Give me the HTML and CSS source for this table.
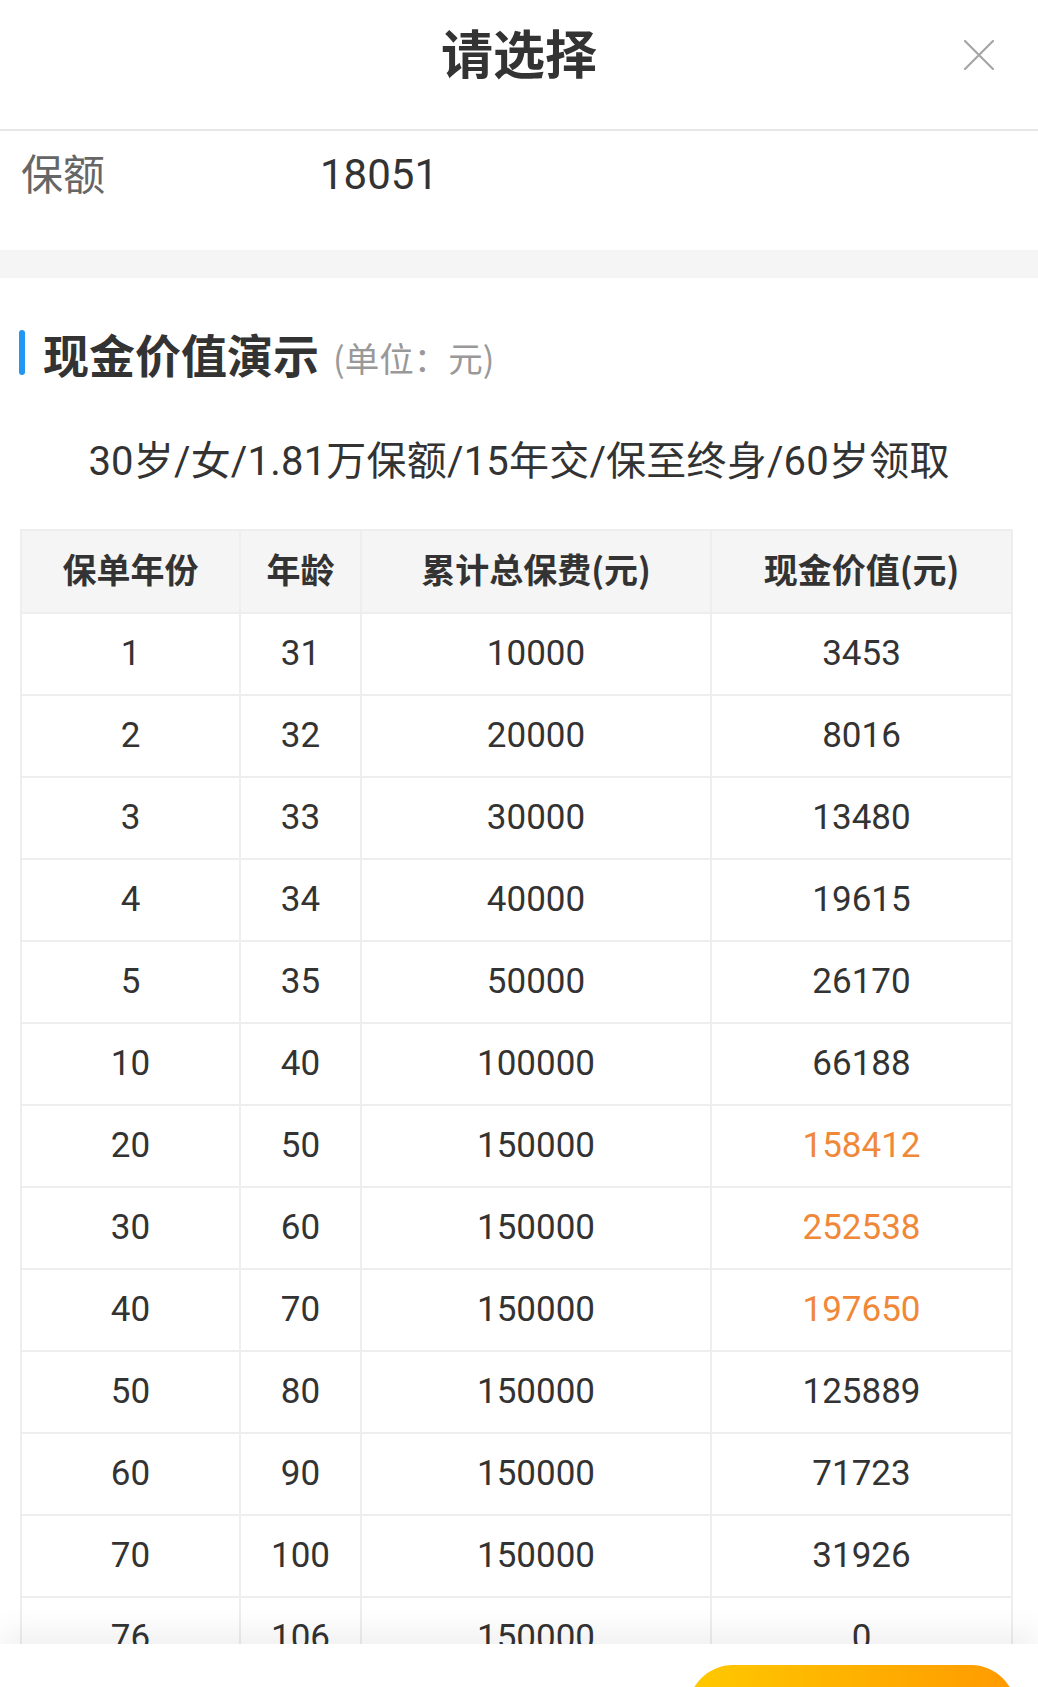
FILE: index.html
```html
<!DOCTYPE html>
<html lang="zh-CN">
<head>
<meta charset="utf-8">
<title>请选择</title>
<link rel="stylesheet" href="styles.css">
</head>
<body>
<div class="sheet">
  <header class="sheet-header">
    <span class="spacer"></span>
    <h1 class="sheet-title">请选择</h1>
    <button class="close-btn" aria-label="关闭">
      <svg viewBox="0 0 30 30" width="30" height="30"><path d="M1 1 L29 29 M29 1 L1 29" stroke="#a6a6a6" stroke-width="2.2" stroke-linecap="round" fill="none"/></svg>
    </button>
  </header>

  <div class="amount-row">
    <span class="amount-label">保额</span>
    <span class="amount-value">18051</span>
  </div>

  <div class="band"></div>

  <div class="section-head">
    <span class="section-bar"></span>
    <h2 class="section-title">现金价值演示</h2>
    <span class="section-unit">(单位：元)</span>
  </div>

  <p class="subtitle">30岁/女/1.81万保额/15年交/保至终身/60岁领取</p>

  <div class="table-wrap">
    <table class="cv-table">
      <colgroup>
        <col class="c1"><col class="c2"><col class="c3"><col class="c4">
      </colgroup>
      <thead>
        <tr><th>保单年份</th><th>年龄</th><th>累计总保费(元)</th><th>现金价值(元)</th></tr>
      </thead>
      <tbody>
        <tr><td>1</td><td>31</td><td>10000</td><td>3453</td></tr>
        <tr><td>2</td><td>32</td><td>20000</td><td>8016</td></tr>
        <tr><td>3</td><td>33</td><td>30000</td><td>13480</td></tr>
        <tr><td>4</td><td>34</td><td>40000</td><td>19615</td></tr>
        <tr><td>5</td><td>35</td><td>50000</td><td>26170</td></tr>
        <tr><td>10</td><td>40</td><td>100000</td><td>66188</td></tr>
        <tr><td>20</td><td>50</td><td>150000</td><td class="hl">158412</td></tr>
        <tr><td>30</td><td>60</td><td>150000</td><td class="hl">252538</td></tr>
        <tr><td>40</td><td>70</td><td>150000</td><td class="hl">197650</td></tr>
        <tr><td>50</td><td>80</td><td>150000</td><td>125889</td></tr>
        <tr><td>60</td><td>90</td><td>150000</td><td>71723</td></tr>
        <tr><td>70</td><td>100</td><td>150000</td><td>31926</td></tr>
        <tr><td>76</td><td>106</td><td>150000</td><td>0</td></tr>
      </tbody>
    </table>
  </div>

  <footer class="sheet-footer">
    <button class="confirm-btn">确定</button>
  </footer>
</div>
</body>
</html>
```

FILE: styles.css
```css
* { box-sizing: border-box; }

html, body {
  margin: 0;
  padding: 0;
  background: #ffffff;
}

body {
  font-family: "Roboto", "Noto Sans CJK SC", "Noto Sans", sans-serif;
  color: #333333;
}

.sheet {
  width: 1038px;
  height: 1687px;
  overflow: hidden;
  display: flex;
  flex-direction: column;
  background: #fff;
}

.sheet-header {
  flex: none;
  height: 131px;
  display: grid;
  grid-template-columns: 1fr auto 1fr;
  align-items: start;
  border-bottom: 2px solid #e6e6e6;
}

.sheet-title {
  margin: 22px 0 0;
  font-family: "Noto Sans CJK SC", sans-serif;
  font-size: 52px;
  line-height: 60px;
  font-weight: 700;
  color: #333;
}

.close-btn {
  justify-self: end;
  margin: 40px 44px 0 0;
  width: 30px;
  height: 30px;
  padding: 0;
  border: 0;
  background: none;
  display: flex;
}

.amount-row {
  flex: none;
  height: 119px;
  display: flex;
  align-items: flex-start;
  padding: 16px 0 0 21px;
}

.amount-label {
  width: 299px;
  font-family: "Noto Sans CJK SC", sans-serif;
  font-size: 42px;
  line-height: 50px;
  color: #666;
}

.amount-value {
  margin-top: 3px;
  font-size: 42px;
  line-height: 50px;
  color: #333;
}

.band {
  flex: none;
  height: 28px;
  background: #f5f5f5;
}

.section-head {
  flex: none;
  display: flex;
  align-items: center;
  margin: 52px 0 0 19px;
  height: 45px;
}

.section-bar {
  width: 6px;
  height: 45px;
  border-radius: 3px;
  background: #2196f3;
  margin-right: 18px;
}

.section-title {
  margin: 0;
  font-family: "Noto Sans CJK SC", sans-serif;
  font-size: 46px;
  line-height: 50px;
  font-weight: 700;
  color: #333;
}

.section-unit {
  margin: 8px 0 0 14px;
  font-family: "Noto Sans CJK SC", sans-serif;
  font-size: 34.5px;
  line-height: 40px;
  color: #999;
}

.subtitle {
  flex: none;
  margin: 62px 0 0;
  text-align: center;
  font-size: 40px;
  letter-spacing: 0.2px;
  line-height: 50px;
  color: #333;
}

.table-wrap {
  flex: 1;
  min-height: 0;
  overflow: hidden;
  padding: 42px 0 0 20px;
}

.cv-table {
  width: 991px;
  border-collapse: collapse;
  table-layout: fixed;
  border: 2px solid #eeeeee;
}

.c1 { width: 219px; }
.c2 { width: 121px; }
.c3 { width: 350px; }
.c4 { width: 301px; }

.cv-table th,
.cv-table td {
  border: 2px solid #eeeeee;
  text-align: center;
  padding: 0;
}

.cv-table thead tr { height: 83px; }

.cv-table th {
  background: #f5f5f5;
  font-family: "Noto Sans CJK SC", sans-serif;
  font-size: 34px;
  font-weight: 700;
  color: #333;
  padding-bottom: 7px;
}

.cv-table tbody tr { height: 82px; }

.cv-table td {
  font-size: 35px;
  color: #333;
  padding-bottom: 2px;
}

.cv-table td.hl { color: #f0883a; }

.sheet-footer {
  flex: none;
  position: relative;
  z-index: 1;
  height: 43px;
  background: #fff;
  box-shadow: 0 -14px 30px rgba(0, 0, 0, 0.06);
  display: flex;
  justify-content: flex-end;
  align-items: flex-start;
  padding: 21px 22px 0 0;
}

.confirm-btn {
  flex: none;
  width: 328px;
  height: 90px;
  border: 0;
  border-radius: 45px;
  background: linear-gradient(90deg, #ffc900 0%, #ff9a00 100%);
  color: #fff;
  font-family: "Noto Sans CJK SC", sans-serif;
  font-size: 36px;
  font-weight: 700;
  padding: 0;
}
```
